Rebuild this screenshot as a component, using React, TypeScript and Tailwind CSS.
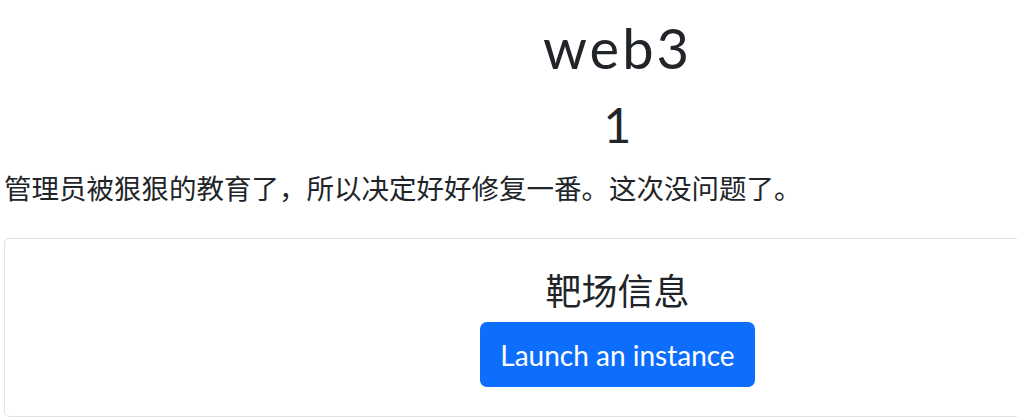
import React from "react";

export default function App() {
  return (
    <div className="w-full h-[419px] overflow-hidden bg-white">
      <div
        className="w-[1227px] ml-[4px] pt-[14px] text-[#212529]"
        style={{ fontFamily: 'Lato, "Noto Sans CJK SC", sans-serif' }}
      >
        <h2 className="text-center text-[56px] leading-[1.2] tracking-[3px] font-normal">web3</h2>
        <h3 className="mt-[15px] text-center text-[48px] leading-[1.2] font-normal">1</h3>
        <p className="mt-[14px] text-[27.5px] leading-[1.5]">
          管理员被狠狠的教育了，所以决定好好修复一番。这次没问题了。
        </p>
        <div className="mt-[29px] border border-[#dee2e6] rounded-[5px] h-[179px]">
          <div className="pt-[31px] text-center">
            <h5 className="text-[36px] leading-[1.2] font-normal">靶场信息</h5>
            <button className="mt-[9px] bg-[#0d6efd] text-white text-[28px] leading-[1.5] px-[20px] py-[11.5px] rounded-[7px]">
              Launch an instance
            </button>
          </div>
        </div>
      </div>
    </div>
  );
}
